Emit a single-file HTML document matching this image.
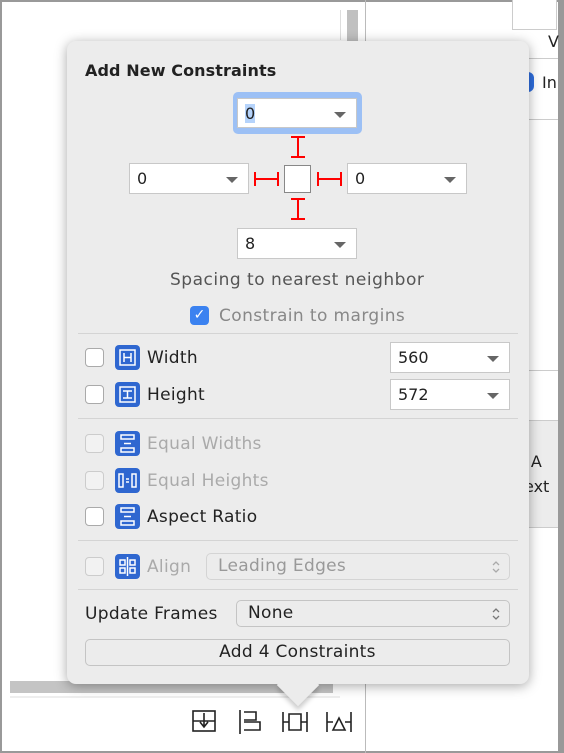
<!DOCTYPE html>
<html><head><style>
*{box-sizing:border-box;margin:0;padding:0}
body{width:564px;height:753px;background:#fff;position:relative;overflow:hidden;font-family:"DejaVu Sans","Liberation Sans",sans-serif;color:#222}
.a{position:absolute}
.pop{left:67px;top:41px;width:462px;height:643px;background:#ececec;border-radius:9px;box-shadow:0 2px 12px rgba(0,0,0,.35)}
.fld{position:absolute;background:#fff;border:1px solid #c8c8c8;height:31px;font-size:16px;padding:5px 0 0 7px}
.fld:after{content:"";position:absolute;right:10px;top:13px;border-left:6px solid transparent;border-right:6px solid transparent;border-top:6px solid #666}
.sep{position:absolute;left:78px;width:440px;height:1px;background:#d4d4d4}
.cb{position:absolute;width:19px;height:19px;border:1px solid #aaa;border-radius:4px;background:#fff}
.cb.d{border-color:#ccc;background:#f2f2f2}
.ic{position:absolute;width:25px;height:25px;background:#2f67d0;border-radius:4px}
.lbl{position:absolute;font-size:17px;letter-spacing:.3px}
.g{color:#aaa}
.red{position:absolute;background:#f00}
.popup{position:absolute;border:1px solid #c4c4c4;border-radius:5px;background:#ececec;font-size:17px;letter-spacing:.3px;padding:2px 0 0 11px}
.popup svg{position:absolute;right:8px;top:5px}
</style></head><body>
<div class="a" style="left:0;top:0;width:564px;height:753px;border:2px solid #999;border-right-width:6px"></div>
<div class="a" style="left:365px;top:0;width:1px;height:753px;background:#bbb"></div>
<div class="a" style="left:347px;top:10px;width:11px;height:32px;background:#c0c0c0"></div>
<div class="a" style="left:340px;top:10px;width:1px;height:30px;background:#ddd"></div>
<div class="a" style="left:512px;top:0;width:45px;height:30px;border:1px solid #ccc;border-top:none;background:#fff"></div>
<div class="a" style="left:548px;top:32px;font-size:16px">V</div>
<div class="a" style="left:366px;top:58px;width:192px;height:1px;background:#ccc"></div>
<div class="a" style="left:522px;top:72px;width:12px;height:20px;background:#2f6fe0;border-radius:6px"></div>
<div class="a" style="left:542px;top:73px;font-size:16px">In</div>
<div class="a" style="left:366px;top:119px;width:192px;height:1px;background:#ccc"></div>
<div class="a" style="left:366px;top:370px;width:192px;height:1px;background:#ccc"></div>
<div class="a" style="left:366px;top:420px;width:192px;height:108px;background:#ececec;border-top:1px solid #ccc;border-bottom:1px solid #ccc"></div>
<div class="a" style="left:520px;top:452px;font-size:16px">- A</div>
<div class="a" style="left:524px;top:477px;font-size:16px">ext</div>
<div class="a" style="left:10px;top:681px;width:323px;height:12px;background:#c4c4c4"></div>
<div class="a" style="left:10px;top:696px;width:330px;height:2px;background:#eee"></div>
<svg class="a" style="left:190px;top:708px" width="170" height="28" fill="none" stroke="#222" stroke-width="1.6">
<rect x="3" y="3" width="22" height="20"/><path d="M3 13h22M14 5v13M10 14l4 5 4-5"/>
<path d="M50 2v24M54 4h12v8H54M54 14h16v8H54"/>
<path d="M93 4v20M93 14h6M99 6h12v16H99zM111 14h6M117 4v20"/>
<path d="M137 4v20M137 14h6M143 22l6-12 6 12zM155 14h6M161 4v20"/>
</svg>

<div class="a pop"></div>
<div class="a" style="left:283px;top:670px;width:30px;height:30px;background:#ececec;transform:rotate(45deg);box-shadow:3px 3px 5px rgba(0,0,0,.2)"></div>
<div class="a" style="left:270px;top:650px;width:60px;height:33px;background:#ececec"></div>

<div class="a" style="left:85px;top:61px;font-size:16px;font-weight:bold;letter-spacing:.1px">Add New Constraints</div>
<div class="a" style="left:233px;top:92px;width:129px;height:42px;background:#9cc0f5;border-radius:5px"></div>
<div class="fld" style="left:237px;top:98px;width:120px;height:30px"><span style="background:#b5d3fb">0</span></div>
<div class="fld" style="left:129px;top:163px;width:120px">0</div>
<div class="fld" style="left:347px;top:163px;width:120px">0</div>
<div class="fld" style="left:237px;top:228px;width:120px">8</div>
<div class="a" style="left:284px;top:165px;width:27px;height:28px;border:1px solid #888;background:#fff"></div>
<div class="red" style="left:297px;top:136px;width:2px;height:22px"></div><div class="red" style="left:291px;top:136px;width:14px;height:2px"></div><div class="red" style="left:291px;top:156px;width:14px;height:2px"></div>
<div class="red" style="left:297px;top:198px;width:2px;height:22px"></div><div class="red" style="left:291px;top:198px;width:14px;height:2px"></div><div class="red" style="left:291px;top:218px;width:14px;height:2px"></div>
<div class="red" style="left:254px;top:178px;width:25px;height:2px"></div><div class="red" style="left:254px;top:172px;width:2px;height:14px"></div><div class="red" style="left:277px;top:172px;width:2px;height:14px"></div>
<div class="red" style="left:317px;top:178px;width:25px;height:2px"></div><div class="red" style="left:317px;top:172px;width:2px;height:14px"></div><div class="red" style="left:340px;top:172px;width:2px;height:14px"></div>
<div class="a" style="left:170px;top:270px;font-size:17px;letter-spacing:.5px;color:#555">Spacing to nearest neighbor</div>
<div class="a" style="left:190px;top:306px;width:19px;height:19px;background:#3b82f0;border-radius:4px;color:#fff;font-size:14px;text-align:center;line-height:19px;font-weight:bold">✓</div>
<div class="a" style="left:219px;top:306px;font-size:17px;letter-spacing:.4px;color:#888">Constrain to margins</div>
<div class="sep" style="top:333px"></div>

<div class="cb" style="left:85px;top:348px"></div><div class="ic" style="left:115px;top:345px"><svg width="25" height="25"><rect x="5" y="5" width="15" height="15" fill="none" stroke="#fff" stroke-width="1.5"/><path d="M9 8v9M16 8v9M9 12.5h7" stroke="#fff" stroke-width="1.5"/></svg></div><div class="lbl" style="left:147px;top:348px">Width</div>
<div class="fld" style="left:390px;top:342px;width:120px">560</div>
<div class="cb" style="left:85px;top:385px"></div><div class="ic" style="left:115px;top:382px"><svg width="25" height="25"><rect x="5" y="5" width="15" height="15" fill="none" stroke="#fff" stroke-width="1.5"/><path d="M8 9h9M8 16h9M12.5 9v7" stroke="#fff" stroke-width="1.5"/></svg></div><div class="lbl" style="left:147px;top:385px">Height</div>
<div class="fld" style="left:390px;top:379px;width:120px">572</div>
<div class="sep" style="top:418px"></div>

<div class="cb d" style="left:85px;top:434px"></div><div class="ic" style="left:115px;top:431px"><svg width="25" height="25"><rect x="6" y="4" width="13" height="4" fill="none" stroke="#fff" stroke-width="1.5"/><rect x="6" y="17" width="13" height="4" fill="none" stroke="#fff" stroke-width="1.5"/><path d="M9 12.5h7" stroke="#fff" stroke-width="1.5"/></svg></div><div class="lbl g" style="left:147px;top:434px">Equal Widths</div>
<div class="cb d" style="left:85px;top:471px"></div><div class="ic" style="left:115px;top:468px"><svg width="25" height="25"><rect x="4" y="6" width="4" height="13" fill="none" stroke="#fff" stroke-width="1.5"/><rect x="17" y="6" width="4" height="13" fill="none" stroke="#fff" stroke-width="1.5"/><path d="M11 11h3M11 14h3" stroke="#fff" stroke-width="1.5"/></svg></div><div class="lbl g" style="left:147px;top:471px">Equal Heights</div>
<div class="cb" style="left:85px;top:507px"></div><div class="ic" style="left:115px;top:504px"><svg width="25" height="25"><rect x="6" y="4" width="13" height="4" fill="none" stroke="#fff" stroke-width="1.5"/><rect x="6" y="17" width="13" height="4" fill="none" stroke="#fff" stroke-width="1.5"/><path d="M9 12.5h7" stroke="#fff" stroke-width="1.5"/></svg></div><div class="lbl" style="left:147px;top:507px">Aspect Ratio</div>
<div class="sep" style="top:540px"></div>

<div class="cb d" style="left:85px;top:557px"></div><div class="ic" style="left:115px;top:554px"><svg width="25" height="25"><path d="M12.5 3v19" stroke="#fff" stroke-width="1.5"/><rect x="5" y="6" width="5" height="5" fill="none" stroke="#fff" stroke-width="1.5"/><rect x="15" y="6" width="5" height="5" fill="none" stroke="#fff" stroke-width="1.5"/><rect x="5" y="14" width="5" height="5" fill="none" stroke="#fff" stroke-width="1.5"/><rect x="15" y="14" width="5" height="5" fill="none" stroke="#fff" stroke-width="1.5"/></svg></div><div class="lbl g" style="left:147px;top:557px">Align</div>
<div class="popup" style="left:206px;top:553px;width:304px;height:27px;color:#999;border-color:#d4d4d4">Leading Edges<svg width="10" height="16" fill="none" stroke="#aaa" stroke-width="1.3"><path d="M2 6l3-3 3 3M2 10l3 3 3-3"/></svg></div>
<div class="sep" style="top:589px"></div>

<div class="lbl" style="left:85px;top:604px">Update Frames</div>
<div class="popup" style="left:236px;top:600px;width:274px;height:27px">None<svg width="10" height="16" fill="none" stroke="#777" stroke-width="1.3"><path d="M2 6l3-3 3 3M2 10l3 3 3-3"/></svg></div>
<div class="a" style="left:85px;top:639px;width:425px;height:27px;border:1px solid #c4c4c4;border-radius:5px;font-size:17px;letter-spacing:.3px;text-align:center;line-height:25px">Add 4 Constraints</div>
</body></html>
